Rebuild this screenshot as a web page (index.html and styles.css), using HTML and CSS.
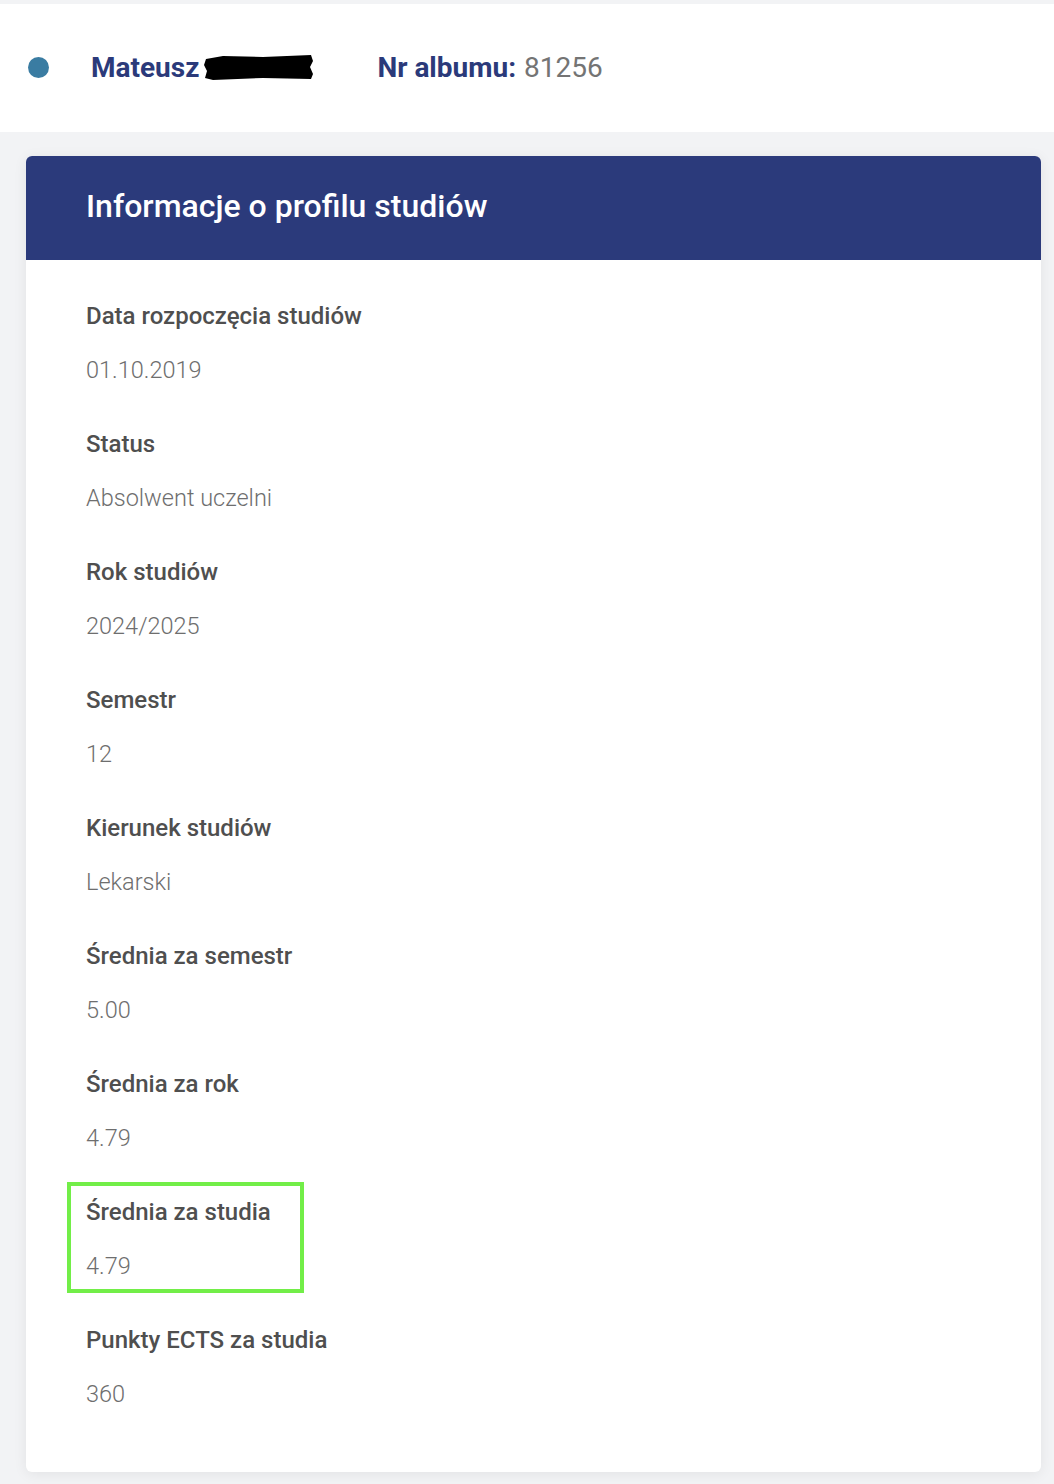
FILE: index.html
```html
<!DOCTYPE html>
<html lang="pl">

<head>
  <meta charset="UTF-8">
  <meta name="viewport" content="width=device-width, initial-scale=1.0">

  <title>Profil studiów</title>
  <link rel="stylesheet" href="styles.css">
</head>

<body>
  <!-- Student bar -->
  <div class="student-bar">
    <span class="status-dot"></span>
    <span class="student-name">Mateusz</span>
    <svg class="name-hidden" width="112" height="28" viewBox="0 0 112 28">
      <path d="M3 6 L20 3 L60 4 L108 2 L110 8 L107 14 L110 21 L108 26 L60 25 L10 27 L2 25 L4 18 L1 12 Z" fill="#000" />
    </svg>
    <span class="album-label">Nr albumu:</span>
    <span class="album-number">81256</span>
  </div>

  <div class="card">
    <div class="card-header">
      <h1>Informacje o profilu studiów</h1>
    </div>
    <div class="card-body">
      <div class="field">
        <div class="field-label">Data rozpoczęcia studiów</div>
        <div class="field-value">01.10.2019</div>
      </div>
      <div class="field">
        <div class="field-label">Status</div>
        <div class="field-value">Absolwent uczelni</div>
      </div>
      <div class="field">
        <div class="field-label">Rok studiów</div>
        <div class="field-value">2024/2025</div>
      </div>
      <div class="field">
        <div class="field-label">Semestr</div>
        <div class="field-value">12</div>
      </div>
      <div class="field">
        <div class="field-label">Kierunek studiów</div>
        <div class="field-value">Lekarski</div>
      </div>
      <div class="field">
        <div class="field-label">Średnia za semestr</div>
        <div class="field-value">5.00</div>
      </div>
      <div class="field">
        <div class="field-label">Średnia za rok</div>
        <div class="field-value">4.79</div>
      </div>
      <div class="field marked">
        <div class="field-label">Średnia za studia</div>
        <div class="field-value">4.79</div>
      </div>
      <div class="field">
        <div class="field-label">Punkty ECTS za studia</div>
        <div class="field-value">360</div>
      </div>
    </div>
  </div>
</body>

</html>
```

FILE: styles.css
```css
body {
  margin: 0;
  padding: 4px 13px 13px 0;
  background-color: #f2f3f5;
  font-family: Roboto, "Liberation Sans", sans-serif;
}

.student-bar {
  display: flex;
  align-items: center;
  height: 126px;
  padding-bottom: 2px;
  margin-right: -13px;
  padding-left: 28px;
  background-color: #fff;
}

.status-dot {
  width: 21px;
  height: 21px;
  border-radius: 50%;
  background-color: #3a7ca2;
  margin-right: 42px;
}

.student-name {
  font-size: 28px;
  font-weight: 700;
  color: #2b3a7a;
}

.name-hidden {
  margin-left: 4px;
  margin-right: 62px;
}

.album-label {
  font-size: 28px;
  font-weight: 700;
  color: #2b3a7a;
  margin-right: 8px;
}

.album-number {
  font-size: 28px;
  color: #747474;
}

.card {
  margin: 24px 0 0 26px;
  background-color: #fff;
  border-radius: 6px;
  box-shadow: 0 2px 14px rgba(0, 0, 0, 0.07);
  overflow: hidden;
}

.card-header {
  display: flex;
  align-items: center;
  height: 100px;
  padding: 0 0 4px 60px;
  background-color: #2b3a7b;
}

.card-header h1 {
  margin: 0;
  font-size: 32px;
  font-weight: 500;
  color: #fff;
}

.card-body {
  display: flex;
  flex-direction: column;
  gap: 44px;
  padding: 41px 60px 63px;
}

.field {
  position: relative;
}

.field-label {
  font-size: 24px;
  line-height: 30px;
  font-weight: 500;
  color: #4f4f4f;
}

.field-value {
  margin-top: 24px;
  font-size: 23.5px;
  line-height: 30px;
  font-weight: 300;
  color: #6e6e6e;
}

/* green frame drawn round the chosen field */
.field.marked::after {
  content: "";
  position: absolute;
  left: -19px;
  top: -15px;
  width: 237px;
  height: 111px;
  box-sizing: border-box;
  border: 4px solid #72ee48;
}
```
